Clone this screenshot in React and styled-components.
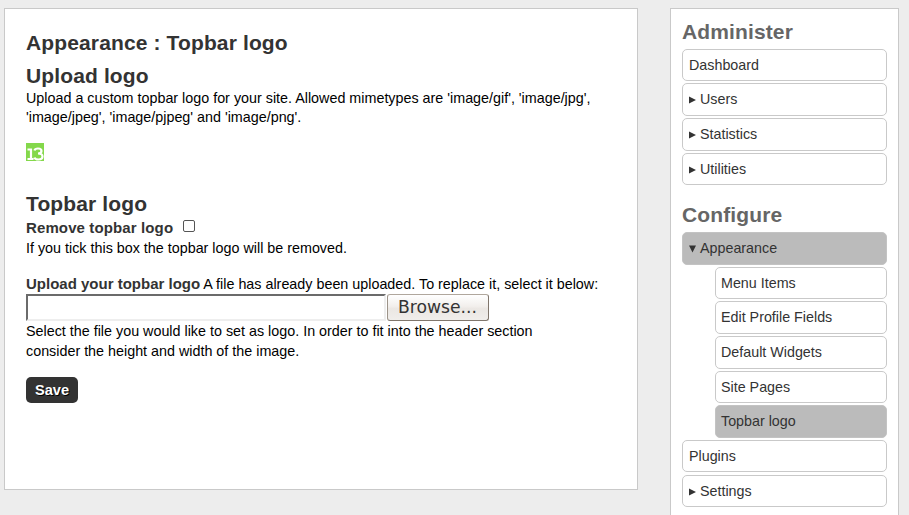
import React from "react";
import styled, { createGlobalStyle } from "styled-components";

const Global = createGlobalStyle`
  * { box-sizing: border-box; }
  html, body { margin: 0; background: #ededed; }
  body {
    height: 515px;
    overflow: hidden;
    font-family: "Liberation Sans", Arial, sans-serif;
    font-size: 14.33px;
    color: #000;
  }
`;

const Page = styled.div`
  display: flex;
  align-items: flex-start;
  gap: 32px;
  height: 515px;
  padding: 8px 0 0 4px;
  overflow: hidden;
`;

const Main = styled.main`
  flex: none;
  width: 634px;
  height: 482px;
  padding: 20px 0 0 21px;
  background: #fff;
  border: 1px solid #c9c9c9;
`;

const Sidebar = styled.aside`
  flex: none;
  width: 229px;
  height: 540px;
  padding: 9px 11px 0;
  background: #fff;
  border: 1px solid #c9c9c9;
`;

const Title = styled.h2`
  margin: 0;
  height: ${(p) => p.$height || 28}px;
  font-size: 21px;
  line-height: 28px;
  letter-spacing: 0.13px;
  color: #333;
`;

const Line = styled.div`
  height: ${(p) => p.$height || 20}px;
  line-height: 20px;
  white-space: nowrap;
`;

const Label = styled.label`
  font-size: 15px;
  font-weight: bold;
  letter-spacing: ${(p) => p.$spacing || 0}px;
  color: #333;
`;

const Logo = styled.svg`
  display: block;
  margin: 16px 0 29px;
`;

const CheckRow = styled.div`
  display: flex;
  height: 20px;
  line-height: 20px;
`;

const Checkbox = styled.input`
  appearance: none;
  width: 12px;
  height: 12px;
  margin: 2px 0 0 10px;
  background: #fff;
  border: 1px solid #555;
  border-radius: 2px;
`;

const FileRow = styled.div`
  display: flex;
  gap: 1px;
  height: 27px;
`;

const FilePath = styled.input`
  width: 360px;
  height: 27px;
  margin: 0;
  background: #fff;
  border: 2px solid;
  border-color: #6b6b6b #eee #eee #6b6b6b;
  outline: 0;
`;

const Browse = styled.button`
  width: 102px;
  height: 27px;
  padding: 0 1px 1px 0;
  font: 17.2px/22px "DejaVu Sans", sans-serif;
  color: #333;
  background: linear-gradient(#fff, #f2efec 45%, #ebe7e3 55%, #f0eeeb);
  border: 1px solid;
  border-color: #b0a79d #80766c #80766c #9c9389;
  border-radius: 3px;
`;

const Save = styled.button`
  display: block;
  width: 52px;
  height: 26px;
  margin-top: 16px;
  padding: 0;
  font: bold 14.6px/24px "Liberation Sans", Arial, sans-serif;
  color: #fff;
  text-shadow: 1px 1px 0 #000;
  background: #333;
  border: 0;
  border-radius: 5px;
`;

const MenuTitle = styled.h2`
  margin: 0;
  height: 30.7px;
  font-size: 21px;
  line-height: 28px;
  letter-spacing: 0.13px;
  color: #666;
`;

const Menu = styled.ul`
  display: flex;
  flex-direction: column;
  gap: 2.1px;
  margin: 0 0 16.2px;
  padding: 0;
  list-style: none;
`;

const Item = styled.li`
  display: flex;
  align-items: center;
  gap: 4px;
  height: 32.55px;
  margin-left: ${(p) => (p.$nested ? 33 : 0)}px;
  padding: 0 0 0.5px ${(p) => (p.$nested ? 5 : 6)}px;
  font-size: 14.3px;
  line-height: 16px;
  color: #333;
  background: ${(p) => (p.$active ? "#bbb" : "#fff")};
  border: 1px solid ${(p) => (p.$active ? "#c3c3c3" : "#c9c9c9")};
  border-radius: 5px;
`;

const Arrow = styled.svg`
  flex: none;
  margin-top: 2px;
`;

const administer = [
  { text: "Dashboard" },
  { text: "Users", arrow: "right" },
  { text: "Statistics", arrow: "right" },
  { text: "Utilities", arrow: "right" },
];

const configure = [
  { text: "Appearance", arrow: "down", active: true },
  { text: "Menu Items", nested: true },
  { text: "Edit Profile Fields", nested: true },
  { text: "Default Widgets", nested: true },
  { text: "Site Pages", nested: true },
  { text: "Topbar logo", nested: true, active: true },
  { text: "Plugins" },
  { text: "Settings", arrow: "right" },
];

function MenuList({ items }) {
  return (
    <Menu>
      {items.map((item) => (
        <Item key={item.text} $nested={item.nested} $active={item.active}>
          {item.arrow && (
            <Arrow width="7" height="8" viewBox="0 0 7 8">
              <path d={item.arrow === "right" ? "M0 .5 7 4 0 7.5Z" : "M0 .5H7L3.5 7.5Z"} fill="#333" />
            </Arrow>
          )}
          <span>{item.text}</span>
        </Item>
      ))}
    </Menu>
  );
}

export default function App() {
  return (
    <>
      <Global />
      <Page>
        <Main>
          <Title $height={33}>Appearance : Topbar logo</Title>
          <Title $height={26}>Upload logo</Title>
          <Line $height={19}>Upload a custom topbar logo for your site. Allowed mimetypes are 'image/gif', 'image/jpg',</Line>
          <Line>'image/jpeg', 'image/pjpeg' and 'image/png'.</Line>
          <Logo width="18" height="18" viewBox="0 0 18 18">
            <path d="M0 0H18V18H0Z" fill="#84d84b" />
            <path
              d="M1.500 6.500H5V15.500M1.500 16H7.500M8.500 7.500Q9 5.500 12 5.500Q15.500 5.500 15.500 8Q15.500 10.500 12 10.500Q16.500 10.500 16.500 13.500Q16.500 16.500 12.500 16.500Q9 16.500 8.500 14.500"
              fill="none"
              stroke="#fff"
              strokeWidth="2.200"
            />
          </Logo>
          <Title>Topbar logo</Title>
          <CheckRow>
            <Label htmlFor="remove" $spacing={0.12}>Remove topbar logo</Label>
            <Checkbox id="remove" type="checkbox" />
          </CheckRow>
          <Line $height={36}>If you tick this box the topbar logo will be removed.</Line>
          <Line>
            <Label htmlFor="path">Upload your topbar logo</Label> A file has already been uploaded. To replace it, select it below:
          </Line>
          <FileRow>
            <FilePath id="path" type="text" />
            <Browse type="button">Browse...</Browse>
          </FileRow>
          <Line>Select the file you would like to set as logo. In order to fit into the header section</Line>
          <Line>consider the height and width of the image.</Line>
          <Save type="button">Save</Save>
        </Main>
        <Sidebar>
          <MenuTitle>Administer</MenuTitle>
          <MenuList items={administer} />
          <MenuTitle>Configure</MenuTitle>
          <MenuList items={configure} />
        </Sidebar>
      </Page>
    </>
  );
}
